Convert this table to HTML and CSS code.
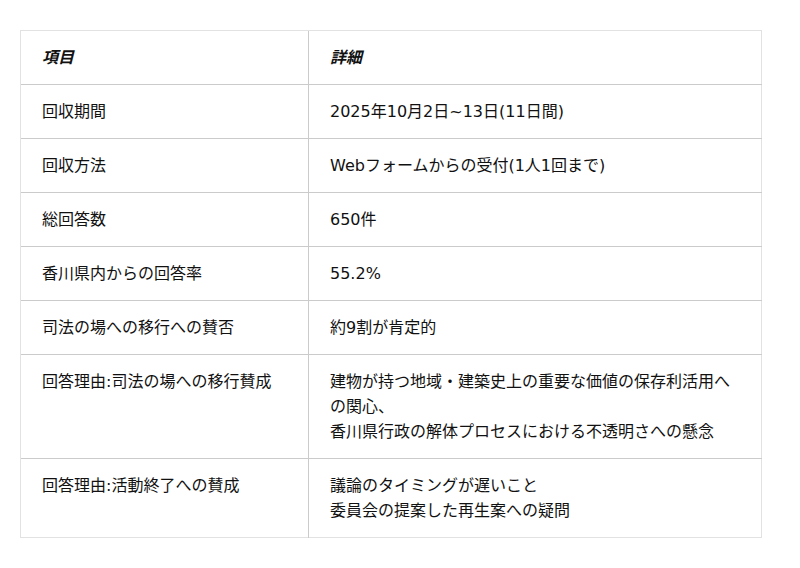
FILE: index.html
```html
<!DOCTYPE html>
<html lang="ja">
<head>
<meta charset="utf-8">
<link rel="stylesheet" href="styles.css">
</head>
<body>
<table class="info">
  <thead>
    <tr><th class="c1"><em>項目</em></th><th><em>詳細</em></th></tr>
  </thead>
  <tbody>
    <tr><td>回収期間</td><td>2025年10月2日~13日(11日間)</td></tr>
    <tr><td>回収方法</td><td>Webフォームからの受付(1人1回まで)</td></tr>
    <tr><td>総回答数</td><td>650件</td></tr>
    <tr><td>香川県内からの回答率</td><td>55.2%</td></tr>
    <tr><td>司法の場への移行への賛否</td><td>約9割が肯定的</td></tr>
    <tr><td>回答理由:司法の場への移行賛成</td><td>建物が持つ地域・建築史上の重要な価値の保存利活用への関心、<br>香川県行政の解体プロセスにおける不透明さへの懸念</td></tr>
    <tr><td>回答理由:活動終了への賛成</td><td>議論のタイミングが遅いこと<br>委員会の提案した再生案への疑問</td></tr>
  </tbody>
</table>
</body>
</html>
```

FILE: styles.css
```css
html, body {
  margin: 0;
  padding: 0;
  background: #fff;
}
body {
  padding: 30px 38px 0 20px;
  font-family: "DejaVu Sans", "Noto Sans CJK JP", sans-serif;
  font-size: 16px;
  color: #111;
}
.info {
  width: 742px;
  border-collapse: collapse;
  border: 1px solid #e2e2e2;
  table-layout: fixed;
}
.info th, .info td {
  text-align: left;
  vertical-align: top;
  padding: 14px 21px 14px 21px;
  line-height: 25px;
  border-top: 1px solid #cbcbcb;
  border-left: 1px solid #cbcbcb;
}
.info th:first-child, .info td:first-child {
  border-left: 1px solid #e2e2e2;
}
.info thead th {
  border-top: 1px solid #e2e2e2;
}
.info .c1 {
  width: 245px;
}
.info th em {
  font-style: italic;
  font-weight: bold;
}
.info td {
  font-weight: normal;
}
```
